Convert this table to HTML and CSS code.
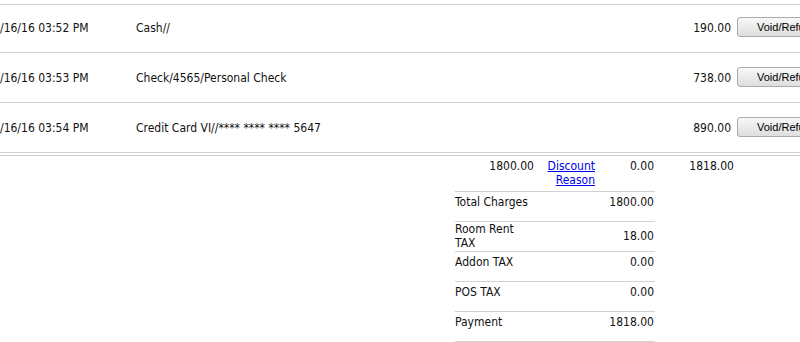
FILE: index.html
```html
<!DOCTYPE html>
<html lang="en">
<head>
<meta charset="utf-8">
<title>Payments</title>
<link rel="stylesheet" href="styles.css">
</head>
<body>
<div class="ledger">
  <div class="row first">
    <div class="date">/16/16 03:52 PM</div>
    <div class="desc">Cash//</div>
    <div class="amt">190.00</div>
    <button class="btn" type="button">Void/Refund</button>
  </div>
  <div class="row">
    <div class="date">/16/16 03:53 PM</div>
    <div class="desc">Check/4565/Personal Check</div>
    <div class="amt">738.00</div>
    <button class="btn" type="button">Void/Refund</button>
  </div>
  <div class="row">
    <div class="date">/16/16 03:54 PM</div>
    <div class="desc">Credit Card VI//**** **** **** 5647</div>
    <div class="amt">890.00</div>
    <button class="btn" type="button">Void/Refund</button>
  </div>
  <div class="totals">
    <div class="summary">
      <div class="head">
        <div class="num">1800.00</div>
        <div class="link-cell"><a href="#">Discount<br>Reason</a></div>
        <div class="num">0.00</div>
      </div>
      <div class="srow"><div class="lbl">Total Charges</div><div class="val">1800.00</div></div>
      <div class="srow tall"><div class="lbl">Room Rent<br>TAX</div><div class="val">18.00</div></div>
      <div class="srow"><div class="lbl">Addon TAX</div><div class="val">0.00</div></div>
      <div class="srow"><div class="lbl">POS TAX</div><div class="val">0.00</div></div>
      <div class="srow"><div class="lbl">Payment</div><div class="val">1818.00</div></div>
    </div>
    <div class="grand">1818.00</div>
  </div>
</div>
</body>
</html>
```
FILE: styles.css
```css
html, body {
  margin: 0;
  padding: 0;
  overflow: hidden;
  background: #fff;
}
body {
  font-family: "DejaVu Sans Condensed", "Liberation Sans", Arial, sans-serif;
  font-size: 12px;
  line-height: 14px;
  color: #111;
}
.ledger {
  width: 854px;
  margin-top: 4px;
  border-top: 1px solid #cfcfcf;
}
.row {
  display: flex;
  align-items: center;
  height: 49px;
  border-bottom: 1px solid #cfcfcf;
}
.row.first {
  height: 45px;
  padding-bottom: 2px;
}
.date {
  width: 136px;
  flex-shrink: 0;
}
.desc {
  flex: 1;
}
.amt {
  width: 80px;
  text-align: right;
  flex-shrink: 0;
}
.btn {
  flex-shrink: 0;
  margin-left: 6px;
  margin-right: 17px;
  margin-bottom: 2px;
  height: 20px;
  width: 100px;
  padding: 0 0 0 19px;
  text-align: left;
  font-family: "Liberation Sans", Arial, sans-serif;
  font-size: 11px;
  color: #000;
  border: 1px solid #ababab;
  border-radius: 3px;
  background: linear-gradient(#f8f8f8, #dedede);
}
.totals {
  margin-top: 2px;
  border-top: 1px solid #cfcfcf;
  display: flex;
  align-items: flex-start;
  padding-left: 455px;
}
.summary {
  width: 200px;
}
.head {
  display: grid;
  grid-template-columns: 79px 61px 1fr;
  height: 32px;
  padding: 3px 1px 0 0;
  border-bottom: 1px solid #d2d2d2;
}
.num {
  text-align: right;
}
.link-cell {
  text-align: right;
}
.link-cell a {
  color: #0000ee;
  text-decoration: underline;
}
.srow {
  display: flex;
  justify-content: space-between;
  align-items: flex-start;
  height: 26px;
  padding: 3px 1px 0 0;
  border-bottom: 1px solid #d2d2d2;
}
.srow.tall {
  padding-top: 0;
  height: 29px;
}
.srow.tall .val {
  align-self: center;
  margin-top: -2px;
}
.val {
  text-align: right;
}
.grand {
  width: 79px;
  text-align: right;
  padding-top: 3px;
}
```
